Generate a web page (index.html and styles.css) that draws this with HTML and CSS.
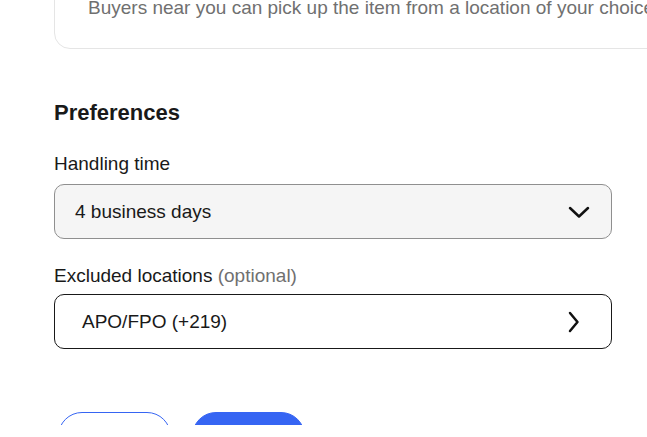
FILE: index.html
```html
<!DOCTYPE html>
<html lang="en">
<head>
<meta charset="utf-8">
<title>Preferences</title>
<link rel="stylesheet" href="styles.css">
</head>
<body>
<div class="viewport">
  <main class="page">
    <section class="card">
      <p class="card-text">Buyers near you can pick up the item from a location of your choice.</p>
    </section>

    <section class="prefs">
      <h2 class="heading">Preferences</h2>

      <div class="field">
        <label class="label">Handling time</label>
        <div class="select">
          <span class="value">4 business days</span>
          <svg class="chev-down" width="22" height="14" viewBox="0 0 22 14" aria-hidden="true">
            <path d="M2 3 L11 11.5 L20 3" fill="none" stroke="#111" stroke-width="2.5" stroke-linecap="round" stroke-linejoin="round"/>
          </svg>
        </div>
      </div>

      <div class="field field-second">
        <label class="label">Excluded locations <span class="optional">(optional)</span></label>
        <div class="link-box">
          <span class="value">APO/FPO (+219)</span>
          <svg class="chev-right" width="12" height="22" viewBox="0 0 12 22" aria-hidden="true">
            <path d="M2 2 L9.5 11 L2 20" fill="none" stroke="#111" stroke-width="2.5" stroke-linecap="round" stroke-linejoin="round"/>
          </svg>
        </div>
      </div>
    </section>

    <div class="actions">
      <button class="btn btn-secondary">Cancel</button>
      <button class="btn btn-primary">Save</button>
    </div>
  </main>
</div>
</body>
</html>
```

FILE: styles.css
```css
* { box-sizing: border-box; }

html, body {
  margin: 0;
  padding: 0;
  background: #fff;
}

body {
  font-family: "Liberation Sans", Arial, sans-serif;
  color: #111820;
}

.viewport {
  height: 425px;
  overflow: hidden;
}

.page {
  padding-left: 54px;
  width: 612px;
}

.card {
  margin-top: -40px;
  width: 720px;
  border: 1px solid #e5e5e5;
  border-radius: 16px;
  padding: 35px 33px 28px;
}

.card-text {
  margin: 0;
  font-size: 19px;
  line-height: 24px;
  color: #707070;
  white-space: nowrap;
}

.prefs {
  margin-top: 50px;
  display: flex;
  flex-direction: column;
}

.heading {
  margin: 0;
  font-size: 22px;
  line-height: 28px;
  font-weight: bold;
  color: #191919;
}

.field {
  margin-top: 25px;
  display: flex;
  flex-direction: column;
  gap: 8px;
}

.field-second {
  margin-top: 25px;
  gap: 6px;
}

.label {
  font-size: 19px;
  line-height: 24px;
  color: #191919;
}

.optional {
  color: #707070;
}

.select,
.link-box {
  height: 55px;
  border-radius: 10px;
  display: flex;
  align-items: center;
  justify-content: space-between;
  font-size: 19px;
  color: #191919;
}

.select {
  background: #f5f5f5;
  border: 1px solid #8f8f8f;
  padding: 0 21px 0 20px;
}

.link-box {
  background: #fff;
  border: 1px solid #191919;
  padding: 0 31px 0 27px;
}

.chev-down,
.chev-right {
  display: block;
  flex: none;
}

.actions {
  margin-top: 63px;
  display: flex;
  gap: 21px;
  padding-left: 4px;
}

.btn {
  width: 113px;
  height: 48px;
  border-radius: 24px;
  font-family: inherit;
  font-size: 16px;
  font-weight: bold;
}

.btn-secondary {
  background: #fff;
  border: 1px solid #3665f3;
  color: #3665f3;
}

.btn-primary {
  background: #3665f3;
  border: 1px solid #3665f3;
  color: #fff;
}
```
